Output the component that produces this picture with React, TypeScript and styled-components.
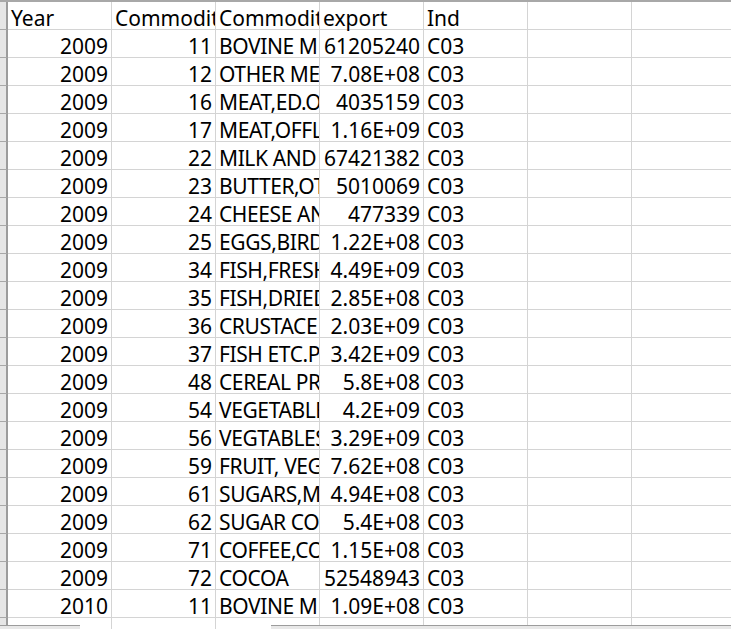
import React from "react";
import styled, { createGlobalStyle } from "styled-components";

const Global = createGlobalStyle`
  html, body { margin: 0; padding: 0; background: #ffffff; overflow: hidden; }
  body { font-family: "Noto Sans", "Noto Sans CJK SC", sans-serif; }
`;

const Sheet = styled.div`
  position: relative;
  width: 731px;
  height: 629px;
  overflow: hidden;
  border-top: 2px solid #a8a8a8;
  box-sizing: border-box;
  background: #ffffff;
`;

const Row = styled.div`
  display: flex;
  height: 28px;
  flex: none;
`;

const RowHead = styled.div`
  flex: none;
  width: 8px;
  box-sizing: border-box;
  background: #e6e6e6;
  border-right: 2px solid #9c9c9c;
  border-bottom: 1px solid #a8a8a8;
`;

const Cell = styled.div<{ $align?: "left" | "right"; $tight?: boolean }>`
  flex: none;
  width: 104px;
  box-sizing: border-box;
  border-right: 1px solid #d4d4d4;
  border-bottom: 1px solid #d4d4d4;
  display: flex;
  align-items: flex-end;
  justify-content: ${(p) => (p.$align === "right" ? "flex-end" : "flex-start")};
  padding: ${(p) => (p.$align === "right" ? "0 3px 0 0" : "0 0 0 3px")};
  overflow-x: clip;
  overflow-y: visible;
  white-space: nowrap;
  font-size: 21px;
  line-height: 21px;
  letter-spacing: ${(p) => (p.$tight ? "-0.4px" : "0")};
  color: #000000;
`;

const BottomBars = styled.div`
  position: absolute;
  left: 0;
  right: 0;
  bottom: 0;
  height: 4px;
  display: flex;
`;

const Bar = styled.div<{ $w?: number }>`
  flex: ${(p) => (p.$w ? `0 0 ${p.$w}px` : "1 1 auto")};
  box-sizing: border-box;
  background: #e8e8e8;
  border-top: 1px solid #9c9c9c;
`;

const Gap = styled.div<{ $w: number }>`
  flex: 0 0 ${(p) => p.$w}px;
`;

type Rec = [string, string, string, string, string];

const header: Rec = ["Year", "Commodit", "Commodit", "export", "Ind"];

const data: Rec[] = [
  ["2009", "11", "BOVINE M", "61205240", "C03"],
  ["2009", "12", "OTHER ME", "7.08E+08", "C03"],
  ["2009", "16", "MEAT,ED.O", "4035159", "C03"],
  ["2009", "17", "MEAT,OFFL", "1.16E+09", "C03"],
  ["2009", "22", "MILK AND", "67421382", "C03"],
  ["2009", "23", "BUTTER,OT", "5010069", "C03"],
  ["2009", "24", "CHEESE AN", "477339", "C03"],
  ["2009", "25", "EGGS,BIRD", "1.22E+08", "C03"],
  ["2009", "34", "FISH,FRESH", "4.49E+09", "C03"],
  ["2009", "35", "FISH,DRIED", "2.85E+08", "C03"],
  ["2009", "36", "CRUSTACE", "2.03E+09", "C03"],
  ["2009", "37", "FISH ETC.P", "3.42E+09", "C03"],
  ["2009", "48", "CEREAL PR", "5.8E+08", "C03"],
  ["2009", "54", "VEGETABLE", "4.2E+09", "C03"],
  ["2009", "56", "VEGTABLES", "3.29E+09", "C03"],
  ["2009", "59", "FRUIT, VEG", "7.62E+08", "C03"],
  ["2009", "61", "SUGARS,M", "4.94E+08", "C03"],
  ["2009", "62", "SUGAR CO", "5.4E+08", "C03"],
  ["2009", "71", "COFFEE,CO", "1.15E+08", "C03"],
  ["2009", "72", "COCOA", "52548943", "C03"],
  ["2010", "11", "BOVINE M", "1.09E+08", "C03"],
];

const EMPTY_COLS = 2;

function DataRow({ rec, numeric }: { rec: Rec; numeric: boolean }) {
  return (
    <Row>
      <RowHead />
      <Cell $align={numeric ? "right" : "left"}>{rec[0]}</Cell>
      <Cell $align={numeric ? "right" : "left"}>{rec[1]}</Cell>
      <Cell $align="left" $tight={numeric}>{rec[2]}</Cell>
      <Cell $align={numeric ? "right" : "left"}>{rec[3]}</Cell>
      <Cell $align="left">{rec[4]}</Cell>
      {Array.from({ length: EMPTY_COLS }).map((_, i) => (
        <Cell key={i} />
      ))}
    </Row>
  );
}

export default function App() {
  return (
    <>
      <Global />
      <Sheet>
        <DataRow rec={header} numeric={false} />
        {data.map((r, i) => (
          <DataRow key={i} rec={r} numeric />
        ))}
        <DataRow rec={["", "", "", "", ""]} numeric />
        <BottomBars>
          <Bar $w={80} />
          <Gap $w={191} />
          <Bar />
        </BottomBars>
      </Sheet>
    </>
  );
}
